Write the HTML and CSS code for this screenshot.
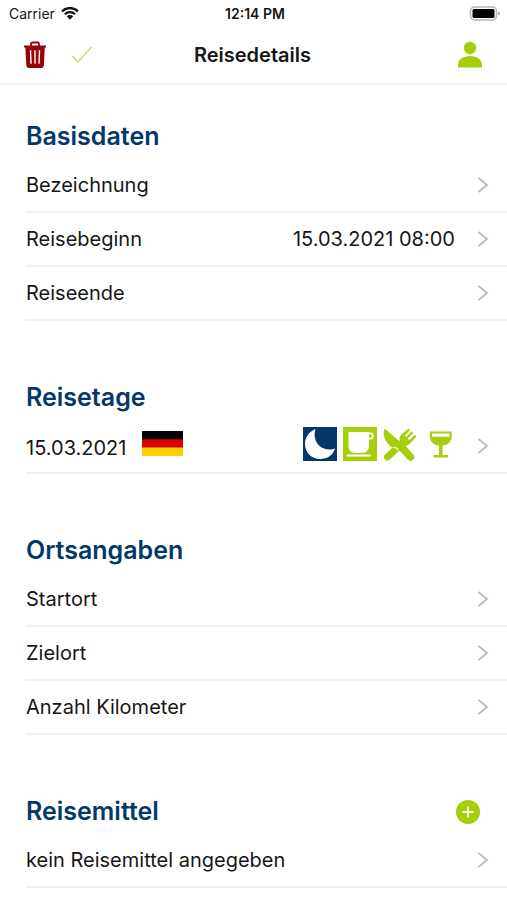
FILE: index.html
```html
<!DOCTYPE html>
<html lang="de">
<head>
<meta charset="utf-8">
<meta name="viewport" content="width=device-width, initial-scale=1">
<title>Reisedetails</title>
<link rel="stylesheet" href="styles.css">
</head>
<body>
<svg class="defs" aria-hidden="true">
  <symbol id="chevron" viewBox="0 0 12 18"><path d="M1.500 2l8.500 7-8.500 7" fill="none" stroke="currentColor" stroke-width="2"/></symbol>
</svg>
<div class="status">
  <div class="carrier">
    <span>Carrier</span>
    <svg width="18" height="14" viewBox="0 0 18 14" aria-hidden="true">
      <path d="M1 4.300a11.500 11.500 0 0 1 16 0M3.900 7.200a7.300 7.300 0 0 1 10.200 0" fill="none" stroke="#111" stroke-width="2.300"/>
      <path d="M5.800 9.300a4.600 4.600 0 0 1 6.400 0L9 12.700z" fill="#111"/>
    </svg>
  </div>
  <time class="clock">12:14 PM</time>
  <svg class="battery" width="32" height="16" viewBox="0 0 32 16" aria-hidden="true">
    <rect x="1.500" y="1" width="26" height="13" rx="4" fill="#fff" stroke="#b5b5b5" stroke-width="1.500"/>
    <rect x="3.500" y="3" width="22" height="9" rx="1.500" fill="#000"/>
    <path d="M29 5.500q2 .6 2 2t-2 2z" fill="#aaa"/>
  </svg>
</div>
<header class="navbar">
  <div class="actions">
    <button type="button" aria-label="Löschen">
      <svg width="24" height="28" viewBox="0 0 24 28" aria-hidden="true">
        <path d="M8 5V3Q8 1.500 9.500 1.500h5q1.500 0 1.500 1.500V5" fill="none" stroke="#980509" stroke-width="1.800"/>
        <path d="M1 4.500h22v2H21.800l-.9 18q-.2 2.500-2.700 2.500H6q-2.500 0-2.700-2.500l-.9-18H1z" fill="#980509"/>
        <path d="M7.500 9.300l.5 13.500M12 9.300v13.500M16.500 9.300l-.5 13.500" fill="none" stroke="#fff" stroke-width="1.400"/>
      </svg>
    </button>
    <button type="button" aria-label="Speichern">
      <svg width="22" height="20" viewBox="0 0 22 20" aria-hidden="true"><path d="M1.500 11l5.500 6L20.500 2" fill="none" stroke="#c4df6c" stroke-width="1.500"/></svg>
    </button>
  </div>
  <h1>Reisedetails</h1>
  <button class="profile" type="button" aria-label="Profil">
    <svg width="24" height="28" viewBox="0 0 24 28" aria-hidden="true"><circle cx="12" cy="7" r="6.200" fill="#a5ce0b"/><path d="M0 26.500v-2.500c0-5.500 5-9 12-9s12 3.500 12 9v2.500z" fill="#a5ce0b"/></svg>
  </button>
</header>
<main>
  <section>
    <div class="heading"><h2>Basisdaten</h2></div>
    <a class="row" href="#"><span>Bezeichnung</span><svg class="chevron"><use href="#chevron"/></svg></a>
    <a class="row" href="#"><span>Reisebeginn</span><time class="value">15.03.2021 08:00</time><svg class="chevron"><use href="#chevron"/></svg></a>
    <a class="row" href="#"><span>Reiseende</span><svg class="chevron"><use href="#chevron"/></svg></a>
  </section>
  <section>
    <div class="heading"><h2>Reisetage</h2></div>
    <a class="row" href="#">
      <time class="day">15.03.2021</time>
      <svg class="flag" width="41" height="25" viewBox="0 0 41 25" role="img" aria-label="Deutschland"><path d="M0 0h41v9H0z" fill="#000"/><path d="M0 8.300h41v9H0z" fill="#d90000"/><path d="M0 16.600h41V25H0z" fill="#ffcd00"/></svg>
      <span class="meals">
        <svg width="34" height="34" viewBox="0 0 34 34" role="img" aria-label="Übernachtung"><path d="M0 0h34v34H0z" fill="#03386a"/><path d="M12.500 2C5.500 5 2 10.500 2 17c0 8.500 6.500 15 15 15 7.500 0 13-4 15-10.500-2 .7-3.500 1-5.500 1C18.500 22.500 13 17.500 11.800 10c-.4-3 0-5.500.7-8z" fill="#fff"/></svg>
        <svg width="34" height="34" viewBox="0 0 34 34" role="img" aria-label="Frühstück"><path d="M0 0h34v34H0z" fill="#a5ce0b"/><path d="M5.500 5H26v14q0 7-7 7h-6.500q-7 0-7-7z" fill="#fff"/><path d="M25.500 6.300h2q2.200 0 2.200 2.200v1q0 2.200-2.200 2.200h-2" fill="none" stroke="#fff" stroke-width="1.800"/><path d="M4.500 28.600H27" stroke="#fff" stroke-width="2" stroke-linecap="round"/></svg>
        <svg width="34" height="34" viewBox="0 0 34 34" role="img" aria-label="Mittagessen">
          <path d="M4.500 30L19 16.500" stroke="#a5ce0b" stroke-width="7" stroke-linecap="round"/>
          <path d="M17 15.500c-1-4.500 0-7 2.500-9L25.500 1.500 27 3l-5 5.700 1.300 1.300L28.700 4.300l1.600 1.600-5.400 5.700 1.300 1.300 5.800-5L33.300 9.500 28 15.500c-2.500 2.500-5 4-8.500 3z" fill="#a5ce0b"/>
          <path d="M2.500 2.300l20 17.200-5.500 5L12.500 20.500C10 21 8 20 6 18 1.500 13.500 0 7 1 3.300q.3-1.500 1.500-1z" fill="#a5ce0b"/>
          <path d="M10.500 20.300q1.700.8 2.800.5l2.500 2.500" fill="none" stroke="#fff" stroke-width="1.200"/>
          <path d="M18.500 20L27.500 30" stroke="#a5ce0b" stroke-width="7.500" stroke-linecap="round"/>
        </svg>
        <svg width="34" height="34" viewBox="0 0 34 34" role="img" aria-label="Abendessen"><path d="M7 4.500h21.500q1.500 9.500-4 12.500-2.500 1.500-5 1.600V28H25v2.500H10.500V28H16v-9.400q-2.500-.1-5-1.600Q5.500 14 7 4.500z" fill="#a5ce0b"/><path d="M9 6.500h17.500v3.200H9z" fill="#fff"/></svg>
      </span>
      <svg class="chevron"><use href="#chevron"/></svg>
    </a>
  </section>
  <section>
    <div class="heading"><h2>Ortsangaben</h2></div>
    <a class="row" href="#"><span>Startort</span><svg class="chevron"><use href="#chevron"/></svg></a>
    <a class="row" href="#"><span>Zielort</span><svg class="chevron"><use href="#chevron"/></svg></a>
    <a class="row" href="#"><span>Anzahl Kilometer</span><svg class="chevron"><use href="#chevron"/></svg></a>
  </section>
  <section>
    <div class="heading">
      <h2>Reisemittel</h2>
      <button type="button" aria-label="Reisemittel hinzufügen">
        <svg width="24" height="24" viewBox="0 0 24 24" aria-hidden="true"><circle cx="12" cy="12" r="12" fill="#a5ce0b"/><path d="M12 6.500v11M6.500 12h11" stroke="#fff" stroke-width="1.800"/></svg>
      </button>
    </div>
    <a class="row" href="#"><span>kein Reisemittel angegeben</span><svg class="chevron"><use href="#chevron"/></svg></a>
  </section>
</main>
</body>
</html>
```
FILE: styles.css
```css
* {
  box-sizing: border-box;
}

body {
  margin: 0;
  background: #fff;
  color: #161616;
  font-family: Inter, "Liberation Sans", sans-serif;
  font-size: 20px;
  line-height: 28px;
}

h1,
h2 {
  margin: 0;
}

svg {
  display: block;
  flex: none;
}

button {
  padding: 0;
  border: 0;
  background: none;
  cursor: pointer;
}

.defs {
  display: none;
}

.status,
.navbar {
  display: grid;
  grid-template-columns: 1fr auto 1fr;
  align-items: center;
}

.status {
  height: 28px;
  padding: 0 6px 0 9px;
  font-size: 14px;
}

.carrier,
.actions {
  display: flex;
  align-items: center;
}

.carrier {
  gap: 6px;
}

.clock {
  font-weight: 600;
}

.battery {
  justify-self: end;
}

.navbar {
  height: 57px;
  padding: 0 25px 2px 23px;
  border-bottom: 2px solid #f2f2f2;
}

.actions {
  gap: 24px;
}

h1 {
  font-size: 20px;
  font-weight: 600;
}

.profile {
  justify-self: end;
}

main {
  padding: 34px 0 12px 26px;
}

section + section {
  margin-top: 59px;
}

.heading {
  display: flex;
  align-items: flex-end;
  justify-content: space-between;
  height: 40px;
  padding: 0 27px 9px 0;
}

.heading button {
  margin-bottom: 1px;
}

h2 {
  color: #03386a;
  font-size: 25px;
  font-weight: 600;
}

.row {
  display: flex;
  align-items: center;
  height: 54px;
  padding-right: 18px;
  border-bottom: 2px solid #f2f2f2;
  color: inherit;
  text-decoration: none;
}

.value,
.meals {
  margin-left: auto;
}

.day {
  padding-top: 4px;
}

.flag {
  margin: 0 16px 6px;
}

.meals {
  display: flex;
  gap: 6px;
  padding-bottom: 4px;
}

.chevron {
  width: 12px;
  height: 18px;
  margin-left: auto;
  color: #bdbdbd;
}

.value + .chevron {
  margin-left: 22px;
}

.meals + .chevron {
  margin-left: 20px;
}
```
